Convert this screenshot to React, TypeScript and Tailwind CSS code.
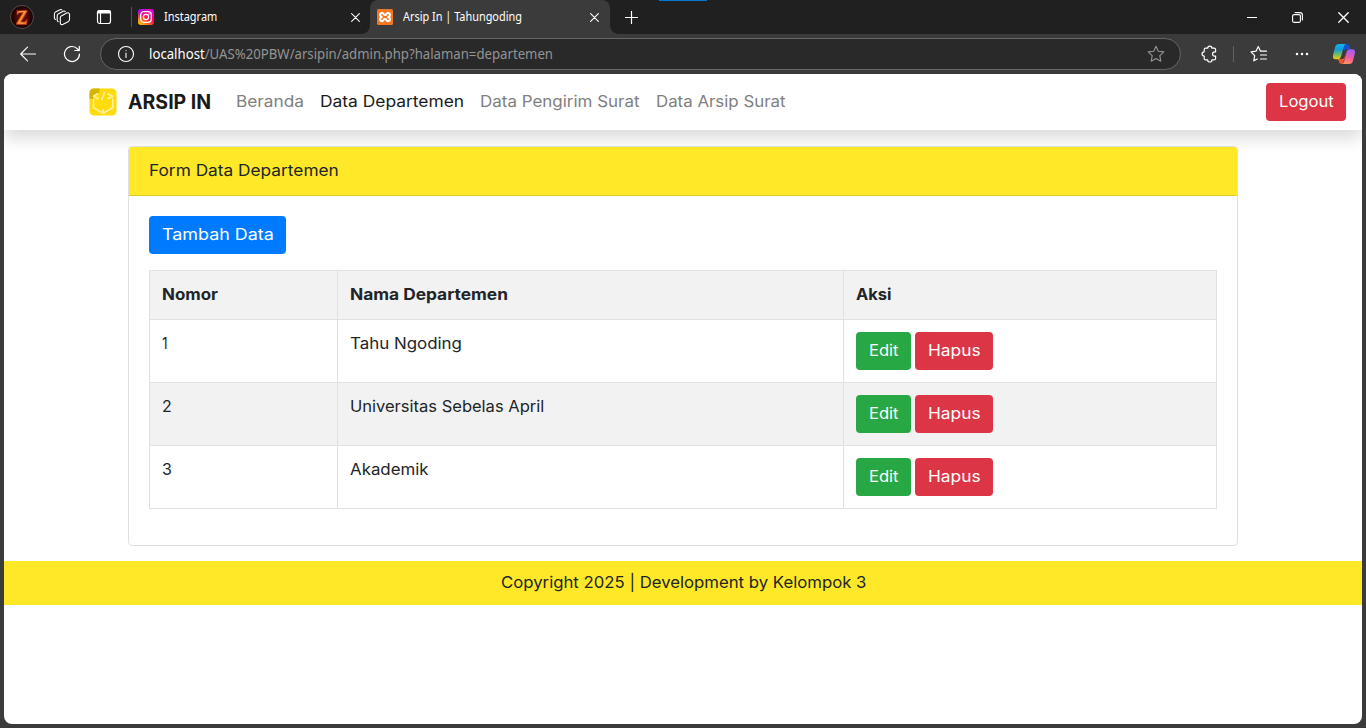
import { useLayoutEffect, useRef, useState } from "react";
import type { ReactNode } from "react";

function Fit({ w, dy = -1, children, className = "" }: { w: number; dy?: number; children: ReactNode; className?: string }) {
  const ref = useRef<HTMLSpanElement>(null);
  const [scale, setScale] = useState(1);
  useLayoutEffect(() => {
    if (ref.current) setScale(w / ref.current.offsetWidth);
  }, [w]);
  return (
    <span className={`inline-block whitespace-nowrap text-left ${className}`} style={{ width: w }}>
      <span ref={ref} className="inline-block origin-left" style={{ transform: `translateY(${dy}px) scaleX(${scale})` }}>
        {children}
      </span>
    </span>
  );
}

const line = { fill: "none", stroke: "currentColor", strokeLinecap: "round", strokeLinejoin: "round" } as const;

function Cross({ size = 9 }: { size?: number }) {
  return (
    <svg width={size} height={size} viewBox="0 0 10 10" {...line} strokeWidth="1.2">
      <path d="M.7.7l8.6 8.6M9.3.7L.7 9.3" />
    </svg>
  );
}

function Avatar() {
  return (
    <svg width="24" height="24" viewBox="0 0 24 24">
      <defs>
        <radialGradient id="glow">
          <stop offset="0" stopColor="#7a1505" />
          <stop offset=".6" stopColor="#3d0703" />
          <stop offset="1" stopColor="#120101" />
        </radialGradient>
      </defs>
      <circle cx="12" cy="12" r="11.5" fill="url(#glow)" stroke="#66605e" strokeWidth=".8" />
      <path d="M7 5.300l1.500.6 8.600-.6v1.400l-6.200 10.400 4 -.3 2.200-2.300-.5 5H6.500v-1.400L12.900 7.700l-3.700.2-2.200 2.200z" fill="#f0702c" stroke="#b8350d" strokeWidth=".7" />
      <path d="M9 6.700l6-.2L8.500 18h5" fill="none" stroke="#ffad55" strokeWidth=".8" />
    </svg>
  );
}

function Workspaces() {
  return (
    <svg width="18" height="18" viewBox="0 0 18 18" {...line} strokeWidth="1.100">
      <path d="M2.400 11.500q-1-.5-1-1.700V5.900q0-1.200 1-1.800L7 1.700q1.200-.5 1.900.2" />
      <path d="M5.200 13.700q-1-.5-1-1.700V7.700q0-1.200 1-1.800l5-2.600q1.200-.6 2 .2" />
      <path d="M7.300 9.700q0-1.200 1-1.800l5.300-2.800q2.700-1 2.900 1.300v5.200q0 1.200-1 1.800l-5.300 2.900q-2.700 1-2.900-1.300z" />
    </svg>
  );
}

function TabActions() {
  return (
    <svg width="16" height="16" viewBox="0 0 16 16" {...line} strokeWidth="1.200">
      <rect x="1.500" y="1.500" width="13" height="13" rx="2.200" />
      <path d="M1.500 4V3.600q0-2 2-2h9q2 0 2 2V4z" fill="currentColor" />
      <path d="M4.500 4.500v9.500" />
    </svg>
  );
}

function Instagram() {
  return (
    <svg width="16" height="16" viewBox="0 0 16 16">
      <defs>
        <linearGradient id="ig" x1=".15" y1="1" x2=".85" y2="0">
          <stop offset="0" stopColor="#ffc400" />
          <stop offset=".3" stopColor="#ff5a1f" />
          <stop offset=".55" stopColor="#ff0069" />
          <stop offset="1" stopColor="#d300e8" />
        </linearGradient>
        <radialGradient id="igv" cx="0" cy="0" r=".6">
          <stop offset="0" stopColor="#7a1cff" />
          <stop offset="1" stopColor="#7a1cff" stopOpacity="0" />
        </radialGradient>
      </defs>
      <rect width="16" height="16" rx="3.200" fill="url(#ig)" />
      <rect width="16" height="16" rx="3.200" fill="url(#igv)" />
      <rect x="2.700" y="2.700" width="10.600" height="10.600" rx="3" fill="none" stroke="#fff" strokeWidth="1.200" />
      <circle cx="8" cy="8" r="2.600" fill="none" stroke="#fff" strokeWidth="1.200" />
      <circle cx="11" cy="5" r=".75" fill="#fff" />
    </svg>
  );
}

function Xampp() {
  return (
    <svg width="16" height="16" viewBox="0 0 16 16">
      <rect width="16" height="16" rx="1.500" fill="#f37623" />
      <path
        d="M4.800 8C3.200 7.300 2.900 6.300 3.100 5.200 3.400 3.700 5.300 3.400 6.300 4.700L7.400 6h1.200l1.100-1.300c1-1.300 2.900-1 3.200.5.2 1.100-.1 2.100-1.700 2.800 1.600.7 1.900 1.700 1.700 2.800-.3 1.500-2.200 1.800-3.200.5L8.600 10H7.400l-1.100 1.300c-1 1.300-2.900 1-3.200-.5C2.900 9.700 3.200 8.700 4.800 8z"
        fill="none"
        stroke="#fff"
        strokeWidth="2"
        strokeLinejoin="round"
      />
    </svg>
  );
}

function Star() {
  return (
    <svg width="18" height="18" viewBox="0 0 18 18" {...line} strokeWidth="1.100">
      <path d="M9 1.200l2.300 5 5.500.7-4 3.800 1 5.500L9 13.600l-4.800 2.600 1-5.500-4-3.800 5.500-.7z" />
    </svg>
  );
}

function Puzzle() {
  return (
    <svg width="18" height="18" viewBox="0 0 18 18" {...line} strokeWidth="1.200">
      <path d="M4.700 3.200h2a2.100 2.100 0 0 1 4.200 0h2.200q1.500 0 1.500 1.500v2.100h-.9a2.100 2.100 0 0 0 0 4.300h.9v2.300q0 1.500-1.500 1.500h-2.200a2.100 2.100 0 0 1-4.200 0h-2q-1.500 0-1.500-1.500v-2.300a2.100 2.100 0 0 1 0-4.300V4.700q0-1.500 1.500-1.500z" />
    </svg>
  );
}

function Favorites() {
  return (
    <svg width="18" height="18" viewBox="0 0 18 18" {...line} strokeWidth="1.200">
      <path d="M16.500 6.200h-6L8.300 1.500 6 6.200l-5 .7 3.700 3.700-.9 5.200 3.500-1.800M10.500 10h6M10.500 14h6" />
    </svg>
  );
}

function Copilot() {
  return (
    <svg width="24" height="22" viewBox="0 0 24 22">
      <defs>
        <linearGradient id="cl" x1="0" y1="0" x2="0" y2="1">
          <stop offset="0" stopColor="#13b3f5" />
          <stop offset=".35" stopColor="#159bdc" />
          <stop offset=".7" stopColor="#74bd62" />
          <stop offset="1" stopColor="#f5d000" />
        </linearGradient>
        <linearGradient id="cr" x1=".3" y1="0" x2=".1" y2="1">
          <stop offset="0" stopColor="#a65cf2" />
          <stop offset=".5" stopColor="#ed5aa5" />
          <stop offset="1" stopColor="#ff9b58" />
        </linearGradient>
      </defs>
      <path d="M9 1h5.500q2.600 0 3.300 2.600l.7 2.700h-3.700q-2 0-2.700 2z" fill="#174fc9" />
      <path d="M6 16h4q2 0 2.700-2.200L15 6.300 13 14l-1.500 5q-.6 2-2.400 2Q7.500 21 7 19z" fill="#ef562c" />
      <path d="M7 1h7.200q-1.700.2-2.300 2.400L9 13.500Q8.200 16.300 5.700 16.300H3.500Q.3 16.300 1 12.200L3.100 4Q4 1 7 1z" fill="url(#cl)" />
      <path d="M17.200 6.200h3q3.300 0 2.700 4.200L21 17.800Q20.200 21 17 21H9.500q1.900-.2 2.500-2.300l2.700-10Q15.300 6.200 17.200 6.200z" fill="url(#cr)" />
    </svg>
  );
}

function Logo() {
  return (
    <svg width="28" height="28" viewBox="0 0 28 28">
      <rect x=".5" y=".5" width="27" height="27" rx="4.500" fill="#ffdb0b" />
      <path d="M.5 11V5Q.5.5 5 .5h5.500v4L5 7.500V11z" fill="#d6b406" />
      <g fill="none" stroke="#fff3a0" strokeWidth="1.600" strokeLinejoin="round">
        <path d="M9 5.500L4.500 8.300l5 2.700M18.500 5.500l5 2.800-5 2.700M15.700 4l-3 8" />
        <path d="M4.500 10.500v9.200L14 25.300l9.700-5.600v-9.200M14 21v4" />
      </g>
    </svg>
  );
}

function TitleBar() {
  return (
    <div className="relative flex h-[34px] items-center bg-[#202020] text-[12px] text-white">
      <div className="flex h-full w-[131px] items-center pl-[10px]">
        <Avatar />
        <div className="ml-[19px] flex"><Workspaces /></div>
        <div className="ml-[25px] flex"><TabActions /></div>
      </div>
      <div className="h-5 w-px bg-[#555]" />
      <div className="flex h-full w-[238px] items-center pl-[6px] pr-[10px]">
        <Instagram />
        <Fit w={53} dy={0} className="ml-[10px]">Instagram</Fit>
        <span className="ml-auto"><Cross /></span>
      </div>
      <div className="relative flex h-full w-[240px] items-center rounded-t-lg bg-[#3b3b3b] pl-[7px] pr-[11px]">
        <i className="absolute -left-2 bottom-0 size-2 bg-[radial-gradient(circle_at_0_0,transparent_7.5px,#3b3b3b_8px)]" />
        <i className="absolute -right-2 bottom-0 size-2 bg-[radial-gradient(circle_at_100%_0,transparent_7.5px,#3b3b3b_8px)]" />
        <Xampp />
        <Fit w={119} dy={0} className="ml-[10px]">Arsip In | Tahungoding</Fit>
        <span className="ml-auto"><Cross /></span>
      </div>
      <svg className="ml-[15px]" width="13" height="13" viewBox="0 0 13 13" {...line} strokeWidth="1.200">
        <path d="M6.500 .5v12M.5 6.500h12" />
      </svg>
      <div className="ml-auto flex items-center gap-[35px] pr-[17.500px]">
        <div className="h-px w-[10px] bg-white" />
        <svg width="11" height="11" viewBox="0 0 11 11" {...line} strokeWidth="1.100">
          <rect x=".6" y="2.600" width="7.800" height="7.800" rx="1.500" />
          <path d="M3 .6h5q2.400 0 2.400 2.400v5" />
        </svg>
        <Cross size={11} />
      </div>
      <div className="absolute left-[659px] top-0 h-px w-12 bg-[#0078d4]" />
    </div>
  );
}

function Toolbar() {
  return (
    <div className="flex h-10 items-center bg-[#3b3b3b] text-white">
      <div className="flex w-[100px] items-center pl-5">
        <svg width="16" height="16" viewBox="0 0 16 16" {...line} strokeWidth="1.100">
          <path d="M15.500 8H.7M7.500 1.200L.7 8l6.800 6.800" />
        </svg>
        <svg className="ml-[27px]" width="18" height="18" viewBox="0 0 18 18" {...line} strokeWidth="1.200">
          <path d="M16.500 9A7.500 7.500 0 1 1 14.600 4L16 5.500M16.300 1.300v4.200h-4.500" />
        </svg>
      </div>
      <div className="flex h-8 w-[1081px] items-center rounded-full border border-[#666] bg-[#292929] pl-4 pr-[15px] text-[14px] text-[#949494]">
        <svg className="text-white" width="18" height="18" viewBox="0 0 18 18" {...line} strokeWidth="1.100">
          <circle cx="9" cy="9" r="7.500" />
          <path d="M9 8v4.500M9 5.500v.1" />
        </svg>
        <Fit w={404} className="ml-[14px]">
          <span className="text-white">localhost</span>/UAS%20PBW/arsipin/admin.php?halaman=departemen
        </Fit>
        <span className="ml-auto"><Star /></span>
      </div>
      <div className="flex flex-1 items-center pl-5">
        <Puzzle />
        <div className="ml-[14px] h-4 w-px bg-[#626262]" />
        <div className="ml-4"><Favorites /></div>
        <svg className="ml-[27px]" width="14" height="4" viewBox="0 0 14 4" fill="#fff">
          <circle cx="2" cy="2" r="1.250" />
          <circle cx="7" cy="2" r="1.250" />
          <circle cx="12" cy="2" r="1.250" />
        </svg>
        <div className="ml-auto pr-[10px]"><Copilot /></div>
      </div>
    </div>
  );
}

const rows = [
  { name: "Tahu Ngoding", w: 112, numeral: 6 },
  { name: "Universitas Sebelas April", w: 194, numeral: 10 },
  { name: "Akademik", w: 79, numeral: 10 },
];

const cell = "border border-[#dee2e6] p-3 text-left align-top";

export default function App() {
  return (
    <div className="flex h-[728px] w-[1366px] flex-col overflow-hidden bg-[#3b3b3b] font-['Noto_Sans',sans-serif]">
      <TitleBar />
      <Toolbar />
      <div className="mx-1 h-[650px] overflow-hidden rounded-lg bg-white font-['Inter',sans-serif] text-base text-[#212529]">
        <nav className="flex h-14 items-center bg-white pl-[85px] pr-4 shadow-[0_8px_16px_rgba(0,0,0,0.15)]">
          <Logo />
          <Fit w={83} dy={1} className="ml-[11px] text-[19.500px] font-bold text-[#1a1a1a]">ARSIP IN</Fit>
          <div className="ml-[24.500px] flex gap-4 text-[#808080]">
            <Fit w={68}>Beranda</Fit>
            <Fit w={144.5} className="text-[#1a1a1a]">Data Departemen</Fit>
            <Fit w={160}>Data Pengirim Surat</Fit>
            <Fit w={129.5}>Data Arsip Surat</Fit>
          </div>
          <button className="ml-auto flex h-[38px] w-20 items-center justify-center rounded bg-[#dc3545] text-white"><Fit w={55}>Logout</Fit></button>
        </nav>

        <section className="relative ml-[124px] mt-4 h-[400px] w-[1110px] overflow-hidden rounded border border-[#dfdfdf] bg-white">
          <header className="flex h-[49px] items-center border-b border-[#dfcb22] bg-[#ffe827] px-5">
            <Fit w={190}>Form Data Departemen</Fit>
          </header>
          <div className="p-5">
            <button className="mb-4 flex h-[38px] w-[137px] items-center justify-center rounded bg-[#007bff] text-white"><Fit w={112}>Tambah Data</Fit></button>
            <table className="w-[1068px] table-fixed border-collapse">
              <colgroup>
                <col className="w-[188px]" />
                <col className="w-[506px]" />
                <col />
              </colgroup>
              <thead>
                <tr className="h-[49px] bg-[#f2f2f2]">
                  <th className={cell}><Fit w={56}>Nomor</Fit></th>
                  <th className={cell}><Fit w={158}>Nama Departemen</Fit></th>
                  <th className={cell}><Fit w={36}>Aksi</Fit></th>
                </tr>
              </thead>
              <tbody>
                {rows.map((r, i) => (
                  <tr key={r.name} className="h-[63px] even:bg-[#f2f2f2]">
                    <td className={cell}><Fit w={r.numeral}>{i + 1}</Fit></td>
                    <td className={cell}><Fit w={r.w}>{r.name}</Fit></td>
                    <td className={cell}>
                      <div className="flex gap-1">
                        <button className="flex h-[38px] w-[55px] items-center justify-center rounded bg-[#28a745] text-white"><Fit w={30}>Edit</Fit></button>
                        <button className="flex h-[38px] w-[78px] items-center justify-center rounded bg-[#dc3545] text-white"><Fit w={53}>Hapus</Fit></button>
                      </div>
                    </td>
                  </tr>
                ))}
              </tbody>
            </table>
          </div>
        </section>

        <footer className="mt-[15px] flex h-11 items-center justify-center bg-[#ffe827]">
          <Fit w={365}>Copyright 2025 | Development by Kelompok 3</Fit>
        </footer>
      </div>
    </div>
  );
}
